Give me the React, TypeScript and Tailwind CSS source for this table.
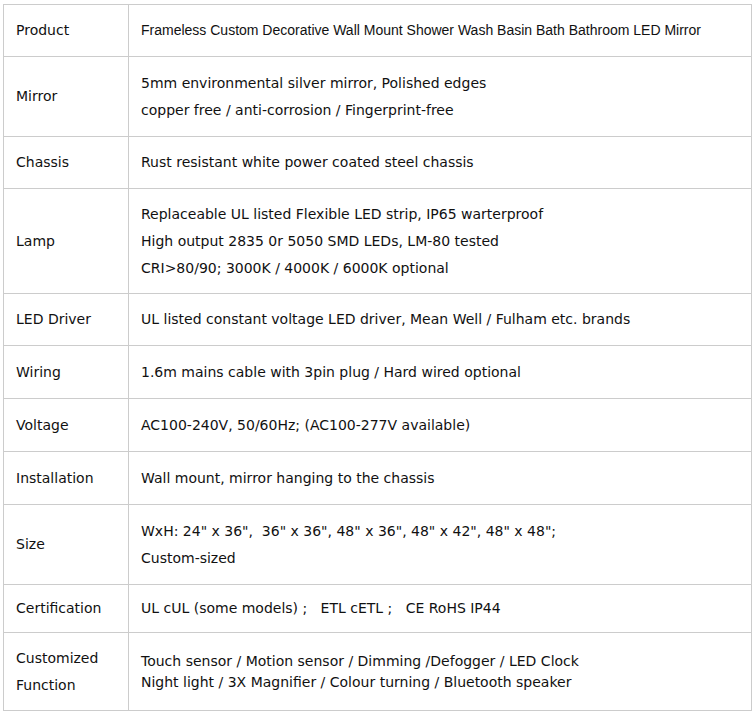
const rows: { label: string[]; lines: string[]; h: string; arial?: boolean; tight?: boolean }[] = [
  {
    label: ["Product"],
    lines: ["Frameless Custom Decorative Wall Mount Shower Wash Basin Bath Bathroom LED Mirror"],
    h: "h-[52px]",
    arial: true,
  },
  {
    label: ["Mirror"],
    lines: ["5mm environmental silver mirror, Polished edges", "copper free / anti-corrosion / Fingerprint-free"],
    h: "h-[80px]",
  },
  { label: ["Chassis"], lines: ["Rust resistant white power coated steel chassis"], h: "h-[52px]" },
  {
    label: ["Lamp"],
    lines: [
      "Replaceable UL listed Flexible LED strip, IP65 warterproof",
      "High output 2835 0r 5050 SMD LEDs, LM-80 tested",
      "CRI>80/90; 3000K / 4000K / 6000K optional",
    ],
    h: "h-[105px]",
  },
  {
    label: ["LED Driver"],
    lines: ["UL listed constant voltage LED driver, Mean Well / Fulham etc. brands"],
    h: "h-[52px]",
  },
  { label: ["Wiring"], lines: ["1.6m mains cable with 3pin plug / Hard wired optional"], h: "h-[53px]" },
  { label: ["Voltage"], lines: ["AC100-240V, 50/60Hz; (AC100-277V available)"], h: "h-[53px]" },
  { label: ["Installation"], lines: ["Wall mount, mirror hanging to the chassis"], h: "h-[53px]" },
  {
    label: ["Size"],
    lines: ["WxH: 24\" x 36\",  36\" x 36\", 48\" x 36\", 48\" x 42\", 48\" x 48\";", "Custom-sized"],
    h: "h-[80px]",
  },
  { label: ["Certification"], lines: ["UL cUL (some models) ;   ETL cETL ;   CE RoHS IP44"], h: "h-[48px]" },
  {
    label: ["Customized", "Function"],
    lines: [
      "Touch sensor / Motion sensor / Dimming /Defogger / LED Clock",
      "Night light / 3X Magnifier / Colour turning / Bluetooth speaker",
    ],
    h: "h-[78px]",
    tight: true,
  },
];

export default function App() {
  return (
    <div className="bg-white w-[752px] h-[711px] pt-[4px] pl-[3px]">
      <table className="w-[749px] border-collapse text-[14px] text-[#111] font-['DejaVu_Sans',Verdana,sans-serif]">
        <tbody>
          {rows.map((r, i) => (
            <tr key={i} className={r.h}>
              <td className="w-[125px] border border-[#cccccc] px-3 py-0 align-middle leading-[27px] whitespace-nowrap">
                {r.label.map((l, j) => (
                  <div key={j}>{l}</div>
                ))}
              </td>
              <td
                className={
                  r.arial
                    ? "border border-[#cccccc] px-3 py-0 align-middle leading-[27px] whitespace-pre font-['Liberation_Sans',Arial,sans-serif]"
                    : r.tight
                    ? "border border-[#cccccc] px-3 py-0 align-middle leading-[21px] whitespace-pre"
                    : "border border-[#cccccc] px-3 py-0 align-middle leading-[27px] whitespace-pre"
                }
              >
                {r.lines.map((l, j) => (
                  <div key={j}>{l}</div>
                ))}
              </td>
            </tr>
          ))}
        </tbody>
      </table>
    </div>
  );
}
